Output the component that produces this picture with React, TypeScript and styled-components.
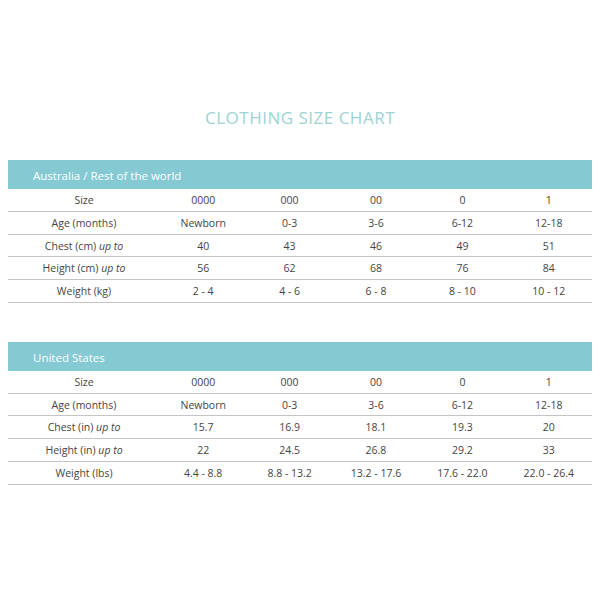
import React from "react";
import styled, { createGlobalStyle } from "styled-components";

const Global = createGlobalStyle`
  html, body { margin: 0; padding: 0; background: #ffffff; }
  body { font-family: "Open Sans", "Liberation Sans", sans-serif; }
`;

const Page = styled.div`
  width: 600px;
  height: 600px;
  box-sizing: border-box;
  padding: 106px 8px 0 8px;
  display: flex;
  flex-direction: column;
`;

const Title = styled.h1`
  margin: 0 0 30px 0;
  text-align: center;
  font-family: "Open Sans", sans-serif;
  font-weight: 400;
  font-size: 17px;
  line-height: 24px;
  letter-spacing: 0.5px;
  color: #9dd4d3;
`;

const Section = styled.section<{ $gap?: number }>`
  margin-bottom: ${(p) => p.$gap ?? 0}px;
`;

const Band = styled.div`
  height: 29px;
  background: #85c9d3;
  color: #ffffff;
  font-size: 11.5px;
  display: flex;
  align-items: center;
  padding: 2px 0 0 25px;
  box-sizing: border-box;
`;

const Row = styled.div<{ $h: number }>`
  display: grid;
  grid-template-columns: 152px repeat(5, 1fr);
  height: ${(p) => p.$h}px;
  border-bottom: 1.5px solid #c4c4c4;
  align-items: center;
  box-sizing: border-box;
`;

const Cell = styled.div`
  text-align: center;
  font-size: 10.5px;
  color: #444444;
  white-space: nowrap;
`;

const Em = styled.em`
  font-style: italic;
`;

type RowData = { label: React.ReactNode; values: string[] };

const au: RowData[] = [
  { label: "Size", values: ["0000", "000", "00", "0", "1"] },
  { label: "Age (months)", values: ["Newborn", "0-3", "3-6", "6-12", "12-18"] },
  { label: <>Chest (cm) <Em>up to</Em></>, values: ["40", "43", "46", "49", "51"] },
  { label: <>Height (cm) <Em>up to</Em></>, values: ["56", "62", "68", "76", "84"] },
  { label: "Weight (kg)", values: ["2 - 4", "4 - 6", "6 - 8", "8 - 10", "10 - 12"] },
];

const us: RowData[] = [
  { label: "Size", values: ["0000", "000", "00", "0", "1"] },
  { label: "Age (months)", values: ["Newborn", "0-3", "3-6", "6-12", "12-18"] },
  { label: <>Chest (in) <Em>up to</Em></>, values: ["15.7", "16.9", "18.1", "19.3", "20"] },
  { label: <>Height (in) <Em>up to</Em></>, values: ["22", "24.5", "26.8", "29.2", "33"] },
  { label: "Weight (lbs)", values: ["4.4 - 8.8", "8.8 - 13.2", "13.2 - 17.6", "17.6 - 22.0", "22.0 - 26.4"] },
];

const Table = ({ title, rows }: { title: string; rows: RowData[] }) => (
  <>
    <Band>{title}</Band>
    {rows.map((r, i) => (
      <Row key={i} $h={i === 0 ? 23 : 22.7}>
        <Cell>{r.label}</Cell>
        {r.values.map((v, j) => (
          <Cell key={j}>{v}</Cell>
        ))}
      </Row>
    ))}
  </>
);

export default function App() {
  return (
    <>
      <Global />
      <Page>
        <Title>CLOTHING SIZE CHART</Title>
        <Section $gap={39}>
          <Table title="Australia / Rest of the world" rows={au} />
        </Section>
        <Section>
          <Table title="United States" rows={us} />
        </Section>
      </Page>
    </>
  );
}
